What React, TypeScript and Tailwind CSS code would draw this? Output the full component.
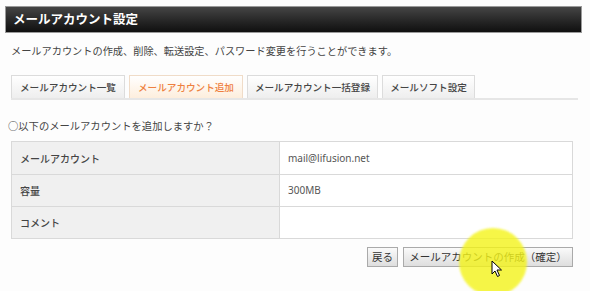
import React from "react";

const jp = { fontFamily: '"Noto Sans CJK JP", "Noto Sans", sans-serif' };

export default function App() {
  return (
    <div className="w-[590px] h-[291px] bg-[#fdfdfd] relative overflow-hidden text-[#333]" style={jp}>
      <div className="pl-[5px] pt-[6px] w-[582px]">
        <div className="h-[27px] bg-gradient-to-b from-[#454545] to-[#101010] border border-[#9a9a9a] flex items-center pl-[7px]">
          <span className="text-white font-bold text-[12.5px] leading-none">メールアカウント設定</span>
        </div>
        <div className="pl-[6px] pr-[3px]">
          <p className="mt-[11px] text-[10.2px] leading-[14px] text-[#444]">
            メールアカウントの作成、削除、転送設定、パスワード変更を行うことができます。
          </p>
          <div className="mt-[18px] flex items-end gap-[4px] border-b-2 border-[#e6e6e6] w-[567px] h-[24px]">
            <div className="h-[23px] w-[114px] flex items-center justify-center border border-b-0 border-[#dcdcdc] bg-gradient-to-b from-white to-[#eeeeee] text-[9.6px] text-[#444] font-medium">
              メールアカウント一覧
            </div>
            <div className="h-[23px] w-[114px] flex items-center justify-center border border-b-0 border-[#f0dcc8] bg-gradient-to-b from-white to-[#fdeedd] text-[9.6px] text-[#ee8040] font-medium">
              メールアカウント追加
            </div>
            <div className="h-[23px] w-[131px] flex items-center justify-center border border-b-0 border-[#dcdcdc] bg-gradient-to-b from-white to-[#eeeeee] text-[9.6px] text-[#444] font-medium">
              メールアカウント一括登録
            </div>
            <div className="h-[23px] w-[93px] flex items-center justify-center border border-b-0 border-[#dcdcdc] bg-gradient-to-b from-white to-[#eeeeee] text-[9.6px] text-[#444] font-medium">
              メールソフト設定
            </div>
          </div>
          <p className="mt-[19px] -ml-[3px] text-[10.3px] leading-[14px] text-[#444]">○以下のメールアカウントを追加しますか？</p>
          <div className="mt-[8px] w-[562px] border border-[#d9d9d9]">
            {[
              ["メールアカウント", "mail@lifusion.net"],
              ["容量", "300MB"],
              ["コメント", ""],
            ].map(([label, value], i) => (
              <div key={i} className={`flex h-[32px] ${i > 0 ? "border-t border-[#d9d9d9]" : ""}`}>
                <div className="w-[268px] bg-[#f0f0f0] border-r border-[#d9d9d9] flex items-center pl-[8px] text-[10px] text-[#444] font-medium">
                  {label}
                </div>
                <div className="flex-1 bg-white flex items-center pl-[8px] text-[10px] text-[#555]" style={{ fontFamily: '"Noto Sans", "Noto Sans CJK JP", sans-serif' }}>
                  {value}
                </div>
              </div>
            ))}
          </div>
          <div className="mt-[8px] w-[562px] flex justify-end gap-[5px]">
            <button className="h-[20px] px-[4px] border border-[#aaaaaa] bg-gradient-to-b from-[#fafafa] to-[#dedede] text-[10.5px] text-[#333] flex items-center">
              戻る
            </button>
            <button className="h-[20px] w-[170px] border border-[#aaaaaa] bg-gradient-to-b from-[#fafafa] to-[#dedede] text-[10.5px] text-[#333] flex items-center justify-center">
              メールアカウントの作成（確定）
            </button>
          </div>
        </div>
      </div>
      <div className="absolute left-[459px] top-[228px] w-[68px] h-[68px] rounded-full bg-[#f4f41a] opacity-80 blur-[1px]" />
      <svg className="absolute left-[491px] top-[260px]" width="12" height="18" viewBox="0 0 12 18">
        <path d="M1 1 L1 14 L4 11 L6.5 16.5 L8.5 15.5 L6 10 L10.5 10 Z" fill="white" stroke="black" strokeWidth="1" strokeLinejoin="round" />
      </svg>
    </div>
  );
}
